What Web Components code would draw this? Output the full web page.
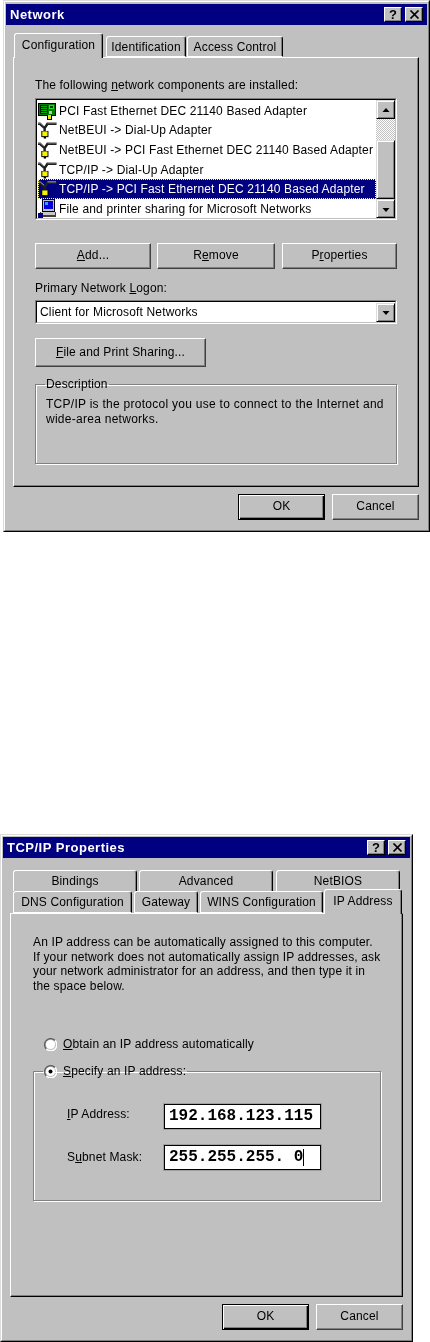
<!DOCTYPE html>
<html>
<head>
<meta charset="utf-8">
<title>Network</title>
<style>
  html, body { margin: 0; background: #fff; }
  body {
    width: 430px; height: 1342px; overflow: hidden;
    font: 12px "Liberation Sans", Arial, sans-serif; color: #000;
    letter-spacing: .15px;
  }
  #first { margin-left: 3px; width: 427px; height: 532px; }
  #second { margin-top: 302px; width: 413px; height: 508px; }
</style>
</head>
<body>

<win-dialog id="first" title="Network" ipad="2px 1px" pad="8px 8px 0 7px">
  <tab-strip>
    <win-tab active w="89" ml="1">Configuration</win-tab>
    <win-tab w="80" ml="3" h="21">Identification</win-tab>
    <win-tab w="96" ml="1" h="21">Access Control</win-tab>
  </tab-strip>
  <tab-page h="430" pad="20px 21px 0 21px">
    <win-text mb="5">The following <u>n</u>etwork components are installed:</win-text>
    <comp-list>
      <comp-row icon="card">PCI Fast Ethernet DEC 21140 Based Adapter</comp-row>
      <comp-row icon="net">NetBEUI -&gt; Dial-Up Adapter</comp-row>
      <comp-row icon="net">NetBEUI -&gt; PCI Fast Ethernet DEC 21140 Based Adapter</comp-row>
      <comp-row icon="net">TCP/IP -&gt; Dial-Up Adapter</comp-row>
      <comp-row icon="net" selected>TCP/IP -&gt; PCI Fast Ethernet DEC 21140 Based Adapter</comp-row>
      <comp-row icon="pc">File and printer sharing for Microsoft Networks</comp-row>
    </comp-list>
    <btn-row gap="6" mt="23">
      <win-button w="116" h="26"><u>A</u>dd...</win-button>
      <win-button w="118" h="26">R<u>e</u>move</win-button>
      <win-button w="115" h="26" ml="1">P<u>r</u>operties</win-button>
    </btn-row>
    <win-text mt="12" mb="4">Primary Network <u>L</u>ogon:</win-text>
    <combo-box>Client for Microsoft Networks</combo-box>
    <btn-row mt="14">
      <win-button w="171" h="29"><u>F</u>ile and Print Sharing...</win-button>
    </btn-row>
    <group-box mt="10" w="362" h="87" pad="5px 10px 0">
      <span slot="legend">Description</span>
      <win-text ls=".27">TCP/IP is the protocol you use to connect to the Internet and<br>wide-area networks.</win-text>
    </group-box>
  </tab-page>
  <dlg-actions mt="7">
    <win-button w="87" h="26" def>OK</win-button>
    <win-button w="87" h="26" ml="7">Cancel</win-button>
  </dlg-actions>
</win-dialog>

<win-dialog id="second" title="TCP/IP Properties" ipad="1px" pad="12px 7px 0 7px">
  <tab-strip>
    <div slot="back">
      <win-tab back w="124" ml="3" h="21">Bindings</win-tab>
      <win-tab back w="134" ml="2" h="21">Advanced</win-tab>
      <win-tab back w="124" ml="3" h="21">NetBIOS</win-tab>
    </div>
    <win-tab w="119" ml="3" h="22">DNS Configuration</win-tab>
    <win-tab w="64" ml="2" h="22">Gateway</win-tab>
    <win-tab w="123" ml="2" h="22">WINS Configuration</win-tab>
    <win-tab active w="78" ml="1" mt="-3">IP Address</win-tab>
  </tab-strip>
  <tab-page h="384" pad="21px 22px 0 22px">
    <win-text lh="14.7">An IP address can be automatically assigned to this computer.<br>If your network does not automatically assign IP addresses, ask<br>your network administrator for an address, and then type it in<br>the space below.</win-text>
    <radio-item mt="43" ml="11"><u>O</u>btain an IP address automatically</radio-item>
    <group-box mt="12" w="348" h="137" pad="25px 0 0 10px">
      <radio-item slot="legend" checked><u>S</u>pecify an IP address:</radio-item>
      <field-row label="&lt;u&gt;I&lt;/u&gt;P Address:" value="192.168.123.115" lift="5"></field-row>
      <field-row mt="16" label="S&lt;u&gt;u&lt;/u&gt;bnet Mask:" value="255.255.255. 0" caret></field-row>
    </group-box>
  </tab-page>
  <dlg-actions mt="7">
    <win-button w="87" h="26" def>OK</win-button>
    <win-button w="87" h="26" ml="7">Cancel</win-button>
  </dlg-actions>
</win-dialog>

<script>
const px = (el, name, fallback) => (el.hasAttribute(name) ? el.getAttribute(name) + "px" : fallback);

// every element gets its markup + styles from a small helper
class Base extends HTMLElement {
  constructor() {
    super();
    this.attachShadow({ mode: "open" });
  }
}

class WinDialog extends Base {
  connectedCallback() {
    this.shadowRoot.innerHTML = `
      <style>
        :host {
          display: block; box-sizing: border-box; background: #c0c0c0;
          border-top: 1px solid #dcdcdc; border-left: 1px solid #dcdcdc;
          border-right: 1px solid #000; border-bottom: 1px solid #000;
          filter: blur(.3px);
        }
        .in {
          box-sizing: border-box; height: 100%; padding: ${this.getAttribute("ipad")};
          border-top: 1px solid #fff; border-left: 1px solid #fff;
          border-right: 1px solid #808080; border-bottom: 1px solid #808080;
        }
        .title {
          height: 21px; background: #000080; color: #fff; box-sizing: border-box;
          display: flex; align-items: center; padding: 0 4px 0 4px;
          font: bold 13px "Liberation Sans", Arial, sans-serif;
          letter-spacing: .5px;
        }
        .title span { flex: 1; }
        .cap {
          width: 18px; height: 15px; box-sizing: border-box; background: #c0c0c0;
          border: 1px solid; border-color: #fff #000 #000 #fff;
          box-shadow: inset -1px -1px 0 #808080;
          display: flex; align-items: center; justify-content: center;
          color: #000; margin-left: 3px; letter-spacing: 0;
        }
        .cap svg { display: block; }
        .body { padding: ${this.getAttribute("pad")}; }
      </style>
      <div class="in">
        <div class="title"><span>${this.getAttribute("title")}</span>
          <div class="cap"><b>?</b></div>
          <div class="cap"><svg width="11" height="9" viewBox="0 0 11 9"><path d="M1.5 .5l8 8M9.5 .5l-8 8" stroke="#000" stroke-width="1.7"/></svg></div>
        </div>
        <div class="body"><slot></slot></div>
      </div>`;
    this.removeAttribute("title");
  }
}

class TabStrip extends Base {
  connectedCallback() {
    this.shadowRoot.innerHTML = `
      <style>
        :host { display: block; position: relative; z-index: 2; }
        .row { display: flex; align-items: flex-end; }
        ::slotted([slot=back]) { display: flex; align-items: flex-end; }
      </style>
      <slot name="back"></slot>
      <div class="row"><slot></slot></div>`;
  }
}

class WinTab extends Base {
  connectedCallback() {
    const active = this.hasAttribute("active");
    const back = this.hasAttribute("back");
    const h = this.getAttribute("h") || 25;
    this.shadowRoot.innerHTML = `
      <style>
        :host {
          display: flex; box-sizing: border-box; flex: none;
          width: ${this.getAttribute("w")}px; height: ${h}px;
          margin-left: ${px(this, "ml", "0")};
          margin-top: ${px(this, "mt", "0")};
          background: #c0c0c0; align-items: center; justify-content: center;
          border-top: 1px solid #fff; border-left: 1px solid #fff;
          border-right: 1px solid #000; border-radius: 3px 3px 0 0;
          box-shadow: inset -1px 0 0 #808080;
          padding-bottom: ${active ? 3 : 0}px;
          ${active ? "margin-bottom:-1px;position:relative;z-index:3;" : "border-bottom:1px solid #fff;"}
          ${back ? "border-bottom:0;" : ""}
        }
      </style>
      <slot></slot>`;
  }
}

class TabPage extends Base {
  connectedCallback() {
    this.shadowRoot.innerHTML = `
      <style>
        :host {
          display: block; box-sizing: border-box; background: #c0c0c0;
          height: ${this.getAttribute("h")}px;
          padding: ${this.getAttribute("pad")};
          border-top: 1px solid #fff; border-left: 1px solid #fff;
          border-right: 1px solid #000; border-bottom: 1px solid #000;
          box-shadow: inset -1px -1px 0 #808080;
        }
      </style>
      <slot></slot>`;
  }
}

class WinText extends Base {
  connectedCallback() {
    this.shadowRoot.innerHTML = `
      <style>
        :host {
          display: block; white-space: nowrap;
          line-height: ${this.getAttribute("lh") || 15}px;
          margin-top: ${px(this, "mt", "0")};
          margin-bottom: ${px(this, "mb", "0")};
          ${this.hasAttribute("ls") ? `letter-spacing:${this.getAttribute("ls")}px;` : ""}
        }
      </style>
      <slot></slot>`;
  }
}

const icons = {
  // green adapter card with yellow connector
  card: `<svg width="20" height="18" viewBox="0 0 20 18" shape-rendering="crispEdges">
    <rect x="0" y="1" width="19" height="13" fill="#000"/>
    <rect x="1" y="2" width="17" height="11" fill="#008000"/>
    <rect x="2" y="3" width="8" height="9" fill="#002800"/>
    <path d="M3 4h6v1H3zM3 6h6v1H3zM3 8h6v1H3zM3 10h6v1H3z" fill="#00b000"/>
    <rect x="12" y="3" width="5" height="4" fill="#20e020"/>
    <rect x="13" y="4" width="3" height="2" fill="#004000"/>
    <rect x="12" y="9" width="3" height="3" fill="#c0c0c0"/>
    <rect x="9" y="13" width="6" height="5" fill="#000"/>
    <rect x="10" y="13" width="4" height="4" fill="#e8e800"/>
  </svg>`,
  // cable: two arms joining into a stem, yellow plug at the bottom
  net: `<svg width="20" height="18" viewBox="0 0 20 18">
    <path d="M0 2.5H2L7 7M7 7L10 2.5H19.5M7 6.5V11" fill="none" stroke="#202020" stroke-width="2.6"/>
    <path d="M0 1.6H2.4L6.4 5M10 1.5H19" fill="none" stroke="#b0b0b0" stroke-width="1"/>
    <rect x="3.5" y="10" width="7.5" height="6.5" fill="#000"/>
    <rect x="4.5" y="10.5" width="5.5" height="5" fill="#f4f400"/>
    <rect x="6" y="16" width="2.5" height="2" fill="#000"/>
  </svg>`,
  // desktop pc with blue screen, grey case and blue printer corner
  pc: `<svg width="20" height="19" viewBox="0 0 20 19" shape-rendering="crispEdges">
    <rect x="4" y="0" width="14" height="13" fill="#000"/>
    <rect x="5" y="1" width="12" height="11" fill="#c0c0c0"/>
    <rect x="6" y="2" width="10" height="8" fill="#0000e0"/>
    <rect x="7" y="3" width="4" height="3" fill="#30a0ff"/>
    <rect x="2" y="13" width="17" height="5" fill="#404040"/>
    <rect x="3" y="13" width="15" height="3" fill="#c8c8c8"/>
    <rect x="0" y="14" width="5" height="5" fill="#000080"/>
  </svg>`,
};

class CompList extends Base {
  connectedCallback() {
    this.shadowRoot.innerHTML = `
      <style>
        :host {
          display: flex; box-sizing: border-box; width: 362px; height: 122px;
          background: #fff; padding: 0;
          border-top: 1px solid #808080; border-left: 1px solid #808080;
          border-right: 1px solid #fff; border-bottom: 1px solid #fff;
        }
        .in {
          display: flex; flex: 1; min-width: 0;
          border-top: 1px solid #000; border-left: 1px solid #000;
          border-right: 1px solid #c0c0c0; border-bottom: 1px solid #c0c0c0;
        }
        .rows { flex: 1; min-width: 0; padding: 1px 0 0 1px; overflow: hidden; }
        .bar { width: 19px; flex: none; display: flex; flex-direction: column; }
        .track {
          height: 21px;
          background: repeating-conic-gradient(#c0c0c0 0 25%, #fff 0 50%) 0 0 / 2px 2px;
        }
      </style>
      <div class="in">
        <div class="rows"><slot></slot></div>
        <div class="bar">
          <arrow-btn dir="up"></arrow-btn>
          <div class="track"></div>
          <arrow-btn class="thumb"></arrow-btn>
          <arrow-btn dir="down"></arrow-btn>
        </div>
      </div>`;
  }
}

class ArrowBtn extends Base {
  connectedCallback() {
    const dir = this.getAttribute("dir");
    const pts = dir === "up" ? "3.5,8 10.5,8 7,4" : "3.5,5 10.5,5 7,9";
    this.shadowRoot.innerHTML = `
      <style>
        :host {
          display: flex; box-sizing: border-box; width: 19px; min-height: 19px; flex: none;
          background: #c0c0c0; align-items: center; justify-content: center;
          border: 1px solid; border-color: #dcdcdc #000 #000 #dcdcdc;
          box-shadow: inset 1px 1px 0 #fff, inset -1px -1px 0 #808080;
        }
        :host(.thumb) { flex: 1; }
      </style>
      ${dir ? `<svg width="14" height="12" viewBox="0 0 14 12"><polygon points="${pts}" fill="#000"/></svg>` : ""}`;
  }
}

class CompRow extends Base {
  connectedCallback() {
    this.shadowRoot.innerHTML = `
      <style>
        :host {
          display: flex; align-items: center; height: 19.6px; box-sizing: border-box;
          white-space: nowrap; position: relative;
        }
        .ic { width: 19px; height: 19px; flex: none; display: flex; align-items: center; }
        .ic svg { display: block; }
        .t { padding-left: 2px; }
        :host([selected]) {
          background: #000080; color: #fff;
          outline: 1px dotted #ffff80; outline-offset: -1px;
        }
      </style>
      <div class="ic">${icons[this.getAttribute("icon")]}</div>
      <span class="t"><slot></slot></span>`;
  }
}

class BtnRow extends Base {
  connectedCallback() {
    this.shadowRoot.innerHTML = `
      <style>
        :host {
          display: flex; gap: ${px(this, "gap", "0")};
          margin-top: ${px(this, "mt", "0")};
        }
      </style>
      <slot></slot>`;
  }
}

class DlgActions extends Base {
  connectedCallback() {
    this.shadowRoot.innerHTML = `
      <style>
        :host {
          display: flex; justify-content: flex-end;
          margin-top: ${px(this, "mt", "0")};
        }
      </style>
      <slot></slot>`;
  }
}

class WinButton extends Base {
  connectedCallback() {
    const def = this.hasAttribute("def");
    this.shadowRoot.innerHTML = `
      <style>
        :host {
          display: flex; box-sizing: border-box; flex: none;
          width: ${this.getAttribute("w")}px; height: ${this.getAttribute("h")}px;
          margin-left: ${px(this, "ml", "0")};
          align-items: center; justify-content: center; background: #c0c0c0;
          border: 1px solid; white-space: nowrap; padding-bottom: 2px;
          border-color: ${def ? "#000" : "#fff #404040 #404040 #fff"};
          box-shadow: ${def
            ? "inset 1px 1px 0 #fff, inset -1px -1px 0 #000, inset -2px -2px 0 #808080"
            : "inset -1px -1px 0 #808080"};
        }
      </style>
      <slot></slot>`;
  }
}

class ComboBox extends Base {
  connectedCallback() {
    this.shadowRoot.innerHTML = `
      <style>
        :host {
          display: block; box-sizing: border-box; width: 362px; height: 24px;
          border-top: 1px solid #808080; border-left: 1px solid #808080;
          border-right: 1px solid #fff; border-bottom: 1px solid #fff;
        }
        .in {
          display: flex; height: 100%; box-sizing: border-box; background: #fff;
          border-top: 1px solid #000; border-left: 1px solid #000;
          border-right: 1px solid #c0c0c0; border-bottom: 1px solid #c0c0c0;
          align-items: center;
        }
        .v { flex: 1; padding-left: 3px; }
      </style>
      <div class="in">
        <span class="v"><slot></slot></span>
        <arrow-btn dir="down"></arrow-btn>
      </div>`;
  }
}

class GroupBox extends Base {
  connectedCallback() {
    this.shadowRoot.innerHTML = `
      <style>
        :host {
          display: block; box-sizing: border-box;
          width: ${this.getAttribute("w")}px; height: ${this.getAttribute("h")}px;
          margin-top: ${px(this, "mt", "0")};
        }
        fieldset {
          box-sizing: border-box; height: 100%; margin: 0;
          padding: ${this.getAttribute("pad")};
          border: 1px solid #808080;
          box-shadow: 1px 1px 0 #fff, inset 1px 1px 0 #fff;
          min-width: 0;
        }
        legend { padding: 0 1px; margin-left: -1px; line-height: 15px; }
      </style>
      <fieldset>
        <legend><slot name="legend"></slot></legend>
        <slot></slot>
      </fieldset>`;
  }
}

class RadioItem extends Base {
  connectedCallback() {
    const checked = this.hasAttribute("checked");
    this.shadowRoot.innerHTML = `
      <style>
        :host {
          display: flex; align-items: center; white-space: nowrap; height: 15px;
          margin-top: ${px(this, "mt", "0")};
          margin-left: ${px(this, "ml", "0")};
        }
        svg { display: block; margin-right: 6px; flex: none; }
      </style>
      <svg width="13" height="13" viewBox="0 0 13 13">
        <path d="M11 2.4A6 6 0 1 0 2.4 11" fill="none" stroke="#606060" stroke-width="1.4"/>
        <path d="M2.4 11A6 6 0 0 0 11 2.4" fill="none" stroke="#fff" stroke-width="1.4"/>
        <circle cx="6.5" cy="6.5" r="4.6" fill="#fff"/>
        ${checked ? '<circle cx="6.5" cy="6.5" r="2" fill="#000"/>' : ""}
      </svg>
      <span><slot></slot></span>`;
  }
}

class FieldRow extends Base {
  connectedCallback() {
    this.shadowRoot.innerHTML = `
      <style>
        :host {
          display: flex; align-items: center; height: 25px; margin-left: 23px;
          margin-top: ${px(this, "mt", "0")};
        }
        label { width: 97px; flex: none; margin-bottom: ${px(this, "lift", "0")}; }
        .box {
          box-sizing: border-box; width: 157px; height: 25px; background: #fff;
          border: 1px solid #000; box-shadow: 0 0 0 1px #a0a0a0;
          padding-left: 4px; white-space: pre; display: flex; align-items: center;
          font: bold 16px/1 "Liberation Mono", monospace; letter-spacing: 0;
        }
        .caret { display: inline-block; width: 1px; height: 17px; background: #000; }
      </style>
      <label>${this.getAttribute("label")}</label>
      <div class="box">${this.getAttribute("value")}${this.hasAttribute("caret") ? '<span class="caret"></span>' : ""}</div>`;
  }
}

customElements.define("win-dialog", WinDialog);
customElements.define("tab-strip", TabStrip);
customElements.define("win-tab", WinTab);
customElements.define("tab-page", TabPage);
customElements.define("win-text", WinText);
customElements.define("comp-list", CompList);
customElements.define("arrow-btn", ArrowBtn);
customElements.define("comp-row", CompRow);
customElements.define("btn-row", BtnRow);
customElements.define("dlg-actions", DlgActions);
customElements.define("win-button", WinButton);
customElements.define("combo-box", ComboBox);
customElements.define("group-box", GroupBox);
customElements.define("radio-item", RadioItem);
customElements.define("field-row", FieldRow);
</script>
</body>
</html>
